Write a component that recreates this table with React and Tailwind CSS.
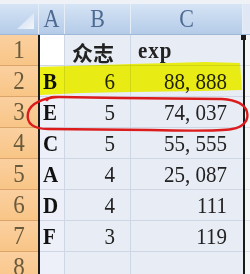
import React from "react";

const rows = [
  { n: "1", a: "", b: "众志", c: "exp", head: true },
  { n: "2", a: "B", b: "6", c: "88, 888" },
  { n: "3", a: "E", b: "5", c: "74, 037" },
  { n: "4", a: "C", b: "5", c: "55, 555" },
  { n: "5", a: "A", b: "4", c: "25, 087" },
  { n: "6", a: "D", b: "4", c: "111" },
  { n: "7", a: "F", b: "3", c: "119" },
  { n: "8", a: "", b: "", c: "" },
];

const serif = { fontFamily: '"Liberation Serif", "Noto Sans CJK SC", serif' };

function Tall({ children, className = "" }) {
  return (
    <span className={`inline-block origin-bottom scale-y-[1.12] ${className}`}>{children}</span>
  );
}

export default function App() {
  return (
    <div className="relative w-[250px] h-[274px] overflow-hidden bg-[#f3f4f6]" style={serif}>
      <div className="h-[4px] bg-[#eef1f5]" />
      {/* column headers */}
      <div className="flex h-[31px] border-b border-[#9fb8d8] bg-gradient-to-b from-[#d6e4f5] to-[#b4cbe8]">
        <div className="relative w-[39px] border-r border-[#e4edf8]">
          <svg className="absolute left-0 top-0" width="38" height="30" viewBox="0 0 38 30">
            <defs>
              <linearGradient id="tri" x1="0" y1="0" x2="1" y2="1">
                <stop offset="0" stopColor="#c9d9ee" />
                <stop offset="1" stopColor="#f2f6fb" />
              </linearGradient>
            </defs>
            <polygon points="17,25 34,25 34,9" fill="url(#tri)" />
          </svg>
        </div>
        <div className="w-[26px] border-r border-[#e4edf8] flex items-end justify-center pb-[3px] text-[22px] leading-none text-[#4d6a92]">
          <Tall>A</Tall>
        </div>
        <div className="w-[66px] border-r border-[#e4edf8] flex items-end justify-center pb-[3px] text-[22px] leading-none text-[#4d6a92]">
          <Tall>B</Tall>
        </div>
        <div className="w-[112px] border-r border-[#e4edf8] flex items-end justify-center pb-[3px] text-[22px] leading-none text-[#4d6a92]">
          <Tall>C</Tall>
        </div>
        <div className="flex-1 bg-[#dfe8f4]" />
      </div>

      {/* body */}
      <div className="relative">
        {rows.map((r, i) => (
          <div key={r.n} className="flex h-[31px]">
            <div className="w-[38px] border-b border-[#dba46a] bg-gradient-to-b from-[#fbd0a0] to-[#f8c586] flex items-end justify-center pb-[3px] text-[23px] leading-none text-[#6a5a3c]">
              <Tall>{r.n}</Tall>
            </div>
            <div className="w-[2px] bg-[#1b1b1b]" />
            <div
              className={`w-[25px] border-b border-r border-[#cfd6e4] flex items-end pl-[3px] pb-[3px] text-[21px] leading-none font-bold text-[#111] ${
                i === 0 ? "bg-white" : "bg-[#edf0f8]"
              }`}
            >
              <Tall>{r.a}</Tall>
            </div>
            <div
              className={`w-[66px] border-b border-r border-[#cfd6e4] bg-[#e8ecf5] flex items-end pb-[3px] leading-none text-[#222] ${
                r.head ? "justify-start pl-[7px] font-bold text-[21px]" : "justify-end pr-[15px] text-[21px]"
              }`}
              style={r.head ? { fontFamily: '"Noto Sans CJK SC", serif' } : undefined}
            >
              {r.head ? <span className="inline-block translate-y-[1px]">{r.b}</span> : <Tall>{r.b}</Tall>}
            </div>
            <div
              className={`w-[112px] border-b border-[#cfd6e4] bg-[#e8ecf5] flex items-end pb-[3px] leading-none text-[#222] text-[21px] ${
                r.head ? "justify-start pl-[7px] font-bold tracking-[1px]" : "justify-end pr-[16px]"
              }`}
            >
              <Tall>{r.c}</Tall>
            </div>
            <div className="w-[2px] bg-[#1b1b1b]" />
            <div className="flex-1 border-b border-[#dde1e8] bg-[#f5f6f8]" />
          </div>
        ))}
        <div className="absolute left-[241px] top-[0px] w-[5px] h-[5px] bg-[#1b1b1b]" />
      </div>

      {/* annotations */}
      <svg className="pointer-events-none absolute left-0 top-0" width="250" height="274" viewBox="0 0 250 274">
        <polygon
          points="40,67 70,66 100,65 131,64 170,63 205,62 240,63 242,90 200,91 130,92 80,93 40,95"
          fill="#ffff14"
          style={{ mixBlendMode: "multiply" }}
        />
        <path
          d="M 58 97 C 44 98 30 103 28 113 C 26 124 34 129 48 129 L 150 130 C 190 131 220 131 232 129 C 244 127 249 120 247 112 C 245 104 236 100 222 99 L 120 98 L 60 97 C 54 97 50 96 47 100"
          fill="none"
          stroke="#dc1c1c"
          strokeWidth="2.4"
          strokeLinecap="round"
          strokeLinejoin="round"
        />
      </svg>
    </div>
  );
}
